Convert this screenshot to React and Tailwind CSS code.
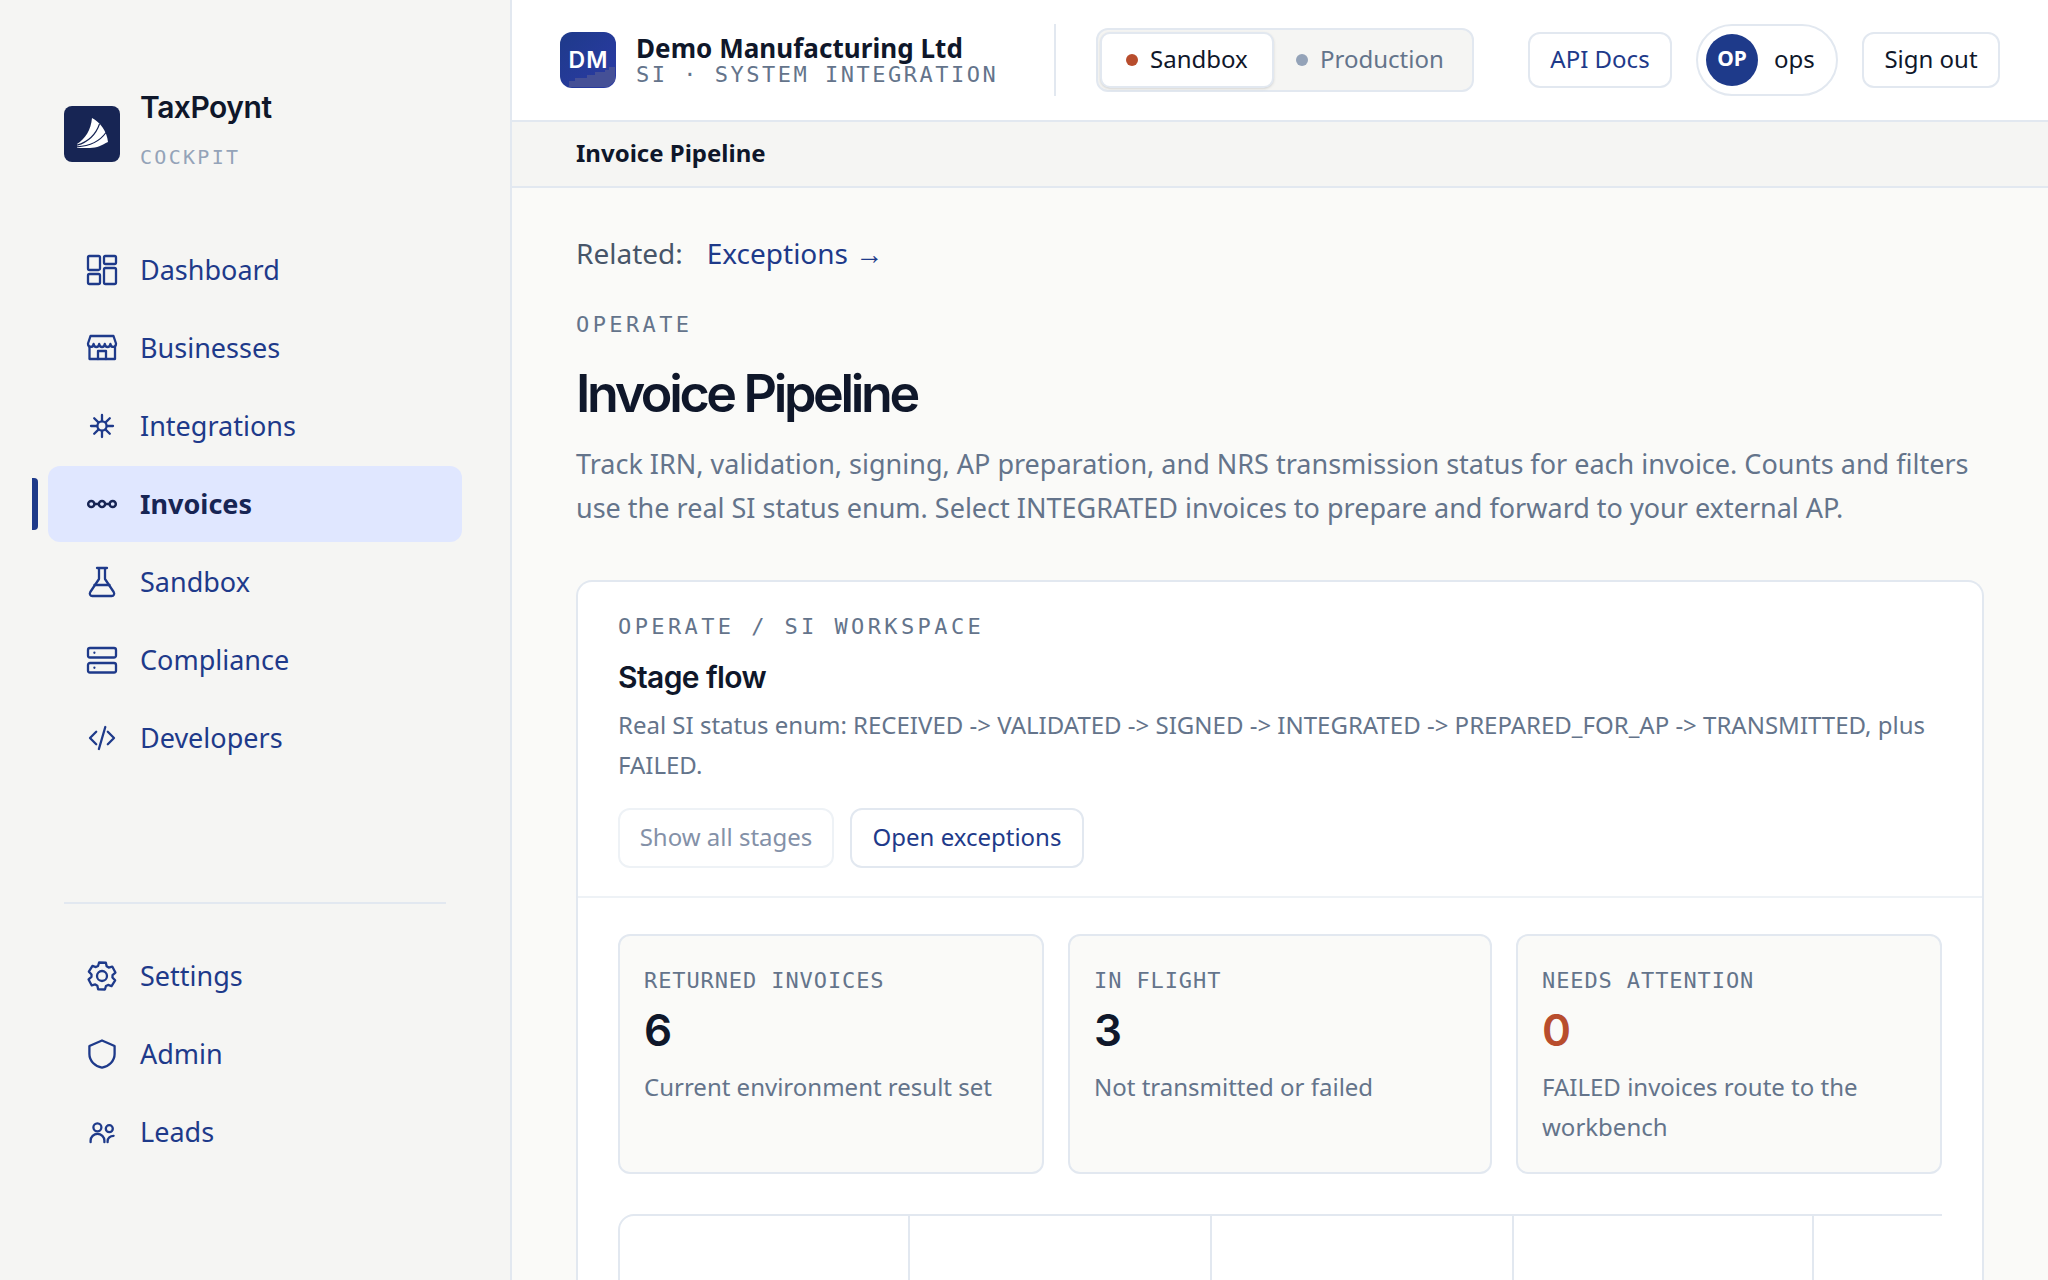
import React from 'react';
import clsx from 'clsx';

// All icons share a 36px grid with the origin in the middle
const Icon = ({ children, strokeWidth = 2.3 }) => (
  <svg
    width="36"
    height="36"
    viewBox="-18 -18 36 36"
    fill="none"
    stroke="currentColor"
    strokeWidth={strokeWidth}
    strokeLinecap="round"
    strokeLinejoin="round"
    className="shrink-0"
  >
    {children}
  </svg>
);

const DashboardIcon = () => (
  <Icon>
    <rect x="-14" y="-14" width="12" height="14" rx="1.5" />
    <rect x="2" y="-14" width="12" height="8" rx="1.5" />
    <rect x="-14" y="4" width="12" height="10" rx="1.5" />
    <rect x="2" y="-2" width="12" height="16" rx="1.5" />
  </Icon>
);

const StoreIcon = () => (
  <Icon>
    <path d="M-11.5 -12h23l2.5 7.5c0 4.5-5 4.5-5.6.5c-.6 4-5 4-5.6 0c-.6 4-5 4-5.6 0c-.6 4-5 4-5.6 0c-.6 4-5.6 4-5.6-.5z" />
    <path d="M-12.5 -1.5v12.5h25.5v-12.5" />
    <path d="M-4 11v-8h8v8" />
  </Icon>
);

const HubIcon = () => (
  <Icon>
    <circle r="4.6" />
    <path d="M0 -5v-6M0 5v6M-5 0h-6M5 0h6M-3.6 -3.6l-4.2 -4.2M3.6 3.6l4.2 4.2M-3.6 3.6l-4.2 4.2M3.6 -3.6l4.2 -4.2" />
  </Icon>
);

const PipelineIcon = () => (
  <Icon strokeWidth={2.5}>
    <circle cx="-10.7" r="3.1" />
    <circle r="3.1" />
    <circle cx="10.7" r="3.1" />
    <path d="M-7.4 0h4M3.4 0h4" />
  </Icon>
);

const FlaskIcon = () => (
  <Icon>
    <path d="M-5 -14h10M-3 -14v11l-8.7 13c-1.2 2 0 4 2 4h19.4c2 0 3.2-2 2-4l-8.7-13v-11" />
    <path d="M-7.5 3h15" />
  </Icon>
);

const ServerIcon = () => (
  <Icon>
    <rect x="-14" y="-12" width="28" height="9.5" rx="2" />
    <rect x="-14" y="3" width="28" height="9.5" rx="2" />
    <path d="M-7.6 -7.3v.1M-7.6 7.7v.1" />
  </Icon>
);

const CodeIcon = () => (
  <Icon>
    <path d="M-5.8 -6.2l-6.2 6.2l6.2 6.2M5.8 -6.2l6.2 6.2l-6.2 6.2M3.3 -11l-6.4 22" />
  </Icon>
);

const GearIcon = () => (
  <Icon>
    <circle r="5" />
    <path
      transform="rotate(2)"
      d="M-3.4 -13.4H3.4L4.3 -9.9L6.4 -8.7L9.9 -9.8L13.3 -3.9L10.5 -1.2V1.2L13.3 3.9L9.9 9.8L6.4 8.7L4.3 9.9L3.4 13.4H-3.4L-4.3 9.9L-6.4 8.7L-9.9 9.8L-13.3 3.9L-10.5 1.2V-1.2L-13.3 -3.9L-9.9 -9.8L-6.4 -8.7L-4.3 -9.9z"
    />
  </Icon>
);

const ShieldIcon = () => (
  <Icon>
    <path d="M0 -13.5L12.6 -8V0C12.6 7 7 12.3 0 13.7C-7 12.3 -12.6 7 -12.6 0V-8z" />
  </Icon>
);

const PeopleIcon = () => (
  <Icon>
    <circle cx="-4.6" cy="-4.7" r="4" />
    <circle cx="7.3" cy="-3.3" r="3.5" />
    <path d="M-11.4 10.2v-1.4a6.9 6.9 0 0 1 13.8 0v1.4" />
    <path d="M5.6 10.2v-1c0-3 2.6-5.4 6-5.4" />
  </Icon>
);

const Logo = () => (
  <svg width="56" height="56" viewBox="0 0 56 56" className="mt-[21px] shrink-0 rounded-lg bg-[#172554]">
    <path d="M28 12C36 16 43 25 44 36C38 39 33 42 26 42H13V38C21 33 27 24 28 12z" fill="#fff" />
    <g fill="none" stroke="#172554" strokeWidth="1.2">
      <path d="M35.500 18C32 28 24 36 13 39.200" />
      <path d="M42 26.500C36 35 26 40 13 40.800" />
    </g>
  </svg>
);

const mainNav = [
  { label: 'Dashboard', icon: DashboardIcon },
  { label: 'Businesses', icon: StoreIcon },
  { label: 'Integrations', icon: HubIcon },
  { label: 'Invoices', icon: PipelineIcon, active: true },
  { label: 'Sandbox', icon: FlaskIcon },
  { label: 'Compliance', icon: ServerIcon },
  { label: 'Developers', icon: CodeIcon },
];

const footerNav = [
  { label: 'Settings', icon: GearIcon },
  { label: 'Admin', icon: ShieldIcon },
  { label: 'Leads', icon: PeopleIcon },
];

const stats = [
  { label: 'RETURNED INVOICES', value: 6, note: 'Current environment result set' },
  { label: 'IN FLIGHT', value: 3, note: 'Not transmitted or failed' },
  { label: 'NEEDS ATTENTION', value: 0, note: 'FAILED invoices route to the workbench', alert: true },
];

const NavItem = ({ item }) => {
  const ItemIcon = item.icon;
  return (
    <a
      className={clsx(
        'relative flex h-[76px] items-center gap-5 rounded-xl pl-9 text-[27px]',
        item.active ? 'bg-[#e0e7ff] font-bold text-[#172554]' : 'text-[#1e3a8a]'
      )}
    >
      {item.active && <span className="absolute -left-4 top-3 h-[52px] w-1.5 rounded-r bg-[#1e3a8a]" />}
      <ItemIcon />
      <span className="leading-10">{item.label}</span>
    </a>
  );
};

const Sidebar = () => (
  <aside className="flex w-[512px] shrink-0 flex-col border-r-2 border-[#e2e8f0] bg-[#f5f5f3] pt-[85px]">
    <div className="flex gap-5 pl-16">
      <Logo />
      <div>
        <div className="font-['Inter'] text-[30px] leading-[44px] font-semibold tracking-[-0.016em] text-[#0f172a]">
          TaxPoynt
        </div>
        <div className="mt-3.5 font-['DejaVu_Sans_Mono',monospace] text-[20px] leading-7 tracking-[2.3px] text-[#94a3b8]">
          COCKPIT
        </div>
      </div>
    </div>

    <nav className="mt-[61px] flex flex-col gap-0.5 px-12">
      {mainNav.map((item) => (
        <NavItem key={item.label} item={item} />
      ))}
    </nav>

    <div className="mx-16 mt-[126px] h-0.5 bg-[#e2e8f0]" />

    <nav className="mt-[34px] flex flex-col gap-0.5 px-12">
      {footerNav.map((item) => (
        <NavItem key={item.label} item={item} />
      ))}
    </nav>
  </aside>
);

const Header = () => (
  <header className="flex h-[122px] shrink-0 items-center border-b-2 border-[#e2e8f0] bg-white px-12">
    <div className="relative flex size-14 items-center justify-center overflow-hidden rounded-xl bg-linear-to-br from-[#1e3a8a] to-[#2b3aa5] font-['Inter'] text-[23px] font-semibold text-white">
      <svg width="56" height="56" className="absolute inset-0">
        <path d="M9 55V49H15V46H27V43H35V40H45V38H49V35H55V49L48 55z" fill="#455096" />
      </svg>
      <span className="relative pl-px tracking-[1px]">DM</span>
    </div>
    <div className="ml-5">
      <div className="text-[26px] leading-7 font-bold tracking-[0.05px] text-[#0f172a]">Demo Manufacturing Ltd</div>
      <div className="pt-px font-['DejaVu_Sans_Mono',monospace] text-[22px] leading-6 tracking-[2.5px] text-[#64748b]">
        SI · SYSTEM INTEGRATION
      </div>
    </div>
    <div className="ml-auto h-[72px] w-0.5 bg-[#e2e8f0]" />

    <div className="ml-10 flex h-16 rounded-xl border-2 border-[#e2e8f0] bg-[#f5f5f3] p-0.5 text-2xl">
      <div className="flex w-[174px] items-center gap-3 rounded-[10px] border-2 border-[#e2e8f0] bg-white pl-6 text-[#0f172a] shadow-sm">
        <span className="size-3 rounded-full bg-[#b84d2d]" />
        <span className="pb-0.5">Sandbox</span>
      </div>
      <div className="flex w-[196px] items-center gap-3 pl-[22px] text-[#64748b]">
        <span className="size-3 rounded-full bg-[#94a3b8]" />
        <span className="pb-0.5">Production</span>
      </div>
    </div>

    <button className="ml-[54px] h-14 w-36 rounded-xl border-2 border-[#e2e8f0] pb-0.5 text-2xl text-[#1e3a8a]">
      API Docs
    </button>
    <div className="ml-6 flex h-[72px] w-[142px] items-center gap-4 rounded-full border-2 border-[#e2e8f0] pl-2 text-2xl text-[#0f172a]">
      <span className="flex size-[52px] items-center justify-center rounded-full bg-[#1e3a8a] pb-1 text-[21px] font-bold text-white">
        OP
      </span>
      <span className="pb-0.5">ops</span>
    </div>
    <button className="ml-6 h-14 w-[138px] rounded-xl border-2 border-[#e2e8f0] pb-0.5 text-2xl text-[#0f172a]">
      Sign out
    </button>
  </header>
);

const Eyebrow = ({ children }) => (
  <div className="font-['DejaVu_Sans_Mono',monospace] text-[22px] leading-7 tracking-[3.4px] text-[#64748b]">
    {children}
  </div>
);

const StatCard = ({ stat }) => (
  <div className="rounded-xl border-2 border-[#e2e8f0] bg-[#fafaf8] px-6 pt-[31px] pb-[25px]">
    <div className="font-['DejaVu_Sans_Mono',monospace] text-[22px] leading-7 tracking-[0.9px] text-[#64748b]">
      {stat.label}
    </div>
    <div
      className={clsx(
        "mt-[11px] font-['Inter'] text-[44px] leading-[48px] font-semibold",
        stat.alert ? 'text-[#b84d2d]' : 'text-[#0f172a]'
      )}
    >
      {stat.value}
    </div>
    <p className="mt-[13px] text-2xl leading-10 text-[#64748b]">{stat.note}</p>
  </div>
);

const StageFlowCard = () => (
  <section className="mt-[50px] flex-1 rounded-t-2xl border-2 border-b-0 border-[#e2e8f0] bg-white">
    <div className="border-b-2 border-[#eef2f6] px-10 pt-[31px] pb-7">
      <Eyebrow>OPERATE / SI WORKSPACE</Eyebrow>
      <h2 className="mt-4 font-['Inter'] text-[30px] leading-10 font-semibold tracking-[-0.02em] text-[#0f172a]">
        Stage flow
      </h2>
      <p className="mt-2 text-2xl leading-10 text-[#64748b]">
        Real SI status enum: RECEIVED -&gt; VALIDATED -&gt; SIGNED -&gt; INTEGRATED -&gt; PREPARED_FOR_AP -&gt; TRANSMITTED,
        plus FAILED.
      </p>
      <div className="mt-[23px] flex gap-4 text-2xl">
        <button className="h-[60px] w-[216px] rounded-xl border-2 border-[#eef2f6] pb-0.5 text-[#8491a8]">
          Show all stages
        </button>
        <button className="h-[60px] w-[234px] rounded-xl border-2 border-[#e2e8f0] pb-0.5 text-[#1e3a8a]">
          Open exceptions
        </button>
      </div>
    </div>

    <div className="px-10 pt-9">
      <div className="grid grid-cols-[426px_424px_426px] gap-6">
        {stats.map((stat) => (
          <StatCard key={stat.label} stat={stat} />
        ))}
      </div>

      <div className="mt-10 overflow-hidden">
        <div className="flex h-40 w-[1800px] rounded-2xl border-2 border-[#e2e8f0]">
          <div className="w-[290px] border-r-2 border-[#e2e8f0]" />
          <div className="w-[302px] border-r-2 border-[#e2e8f0]" />
          <div className="w-[302px] border-r-2 border-[#e2e8f0]" />
          <div className="w-[300px] border-r-2 border-[#e2e8f0]" />
        </div>
      </div>
    </div>
  </section>
);

export default function App() {
  return (
    <div className="flex h-screen overflow-hidden bg-[#fafaf8] font-['Noto_Sans',sans-serif]">
      <Sidebar />
      <div className="flex min-w-0 flex-1 flex-col">
        <Header />
        <div className="flex h-[66px] shrink-0 items-center border-b-2 border-[#e2e8f0] bg-[#f5f5f3] px-16 pb-0.5 text-2xl font-bold text-[#0f172a]">
          Invoice Pipeline
        </div>
        <main className="flex min-h-0 flex-1 flex-col px-16 pt-[43px]">
          <div className="flex gap-6 text-[28px] leading-[44px]">
            <span className="text-[#475569]">Related:</span>
            <a className="text-[#1e3a8a]">Exceptions →</a>
          </div>
          <div className="mt-9">
            <Eyebrow>OPERATE</Eyebrow>
          </div>
          <h1 className="mt-[25px] font-['Inter'] text-[52px] leading-[60px] font-semibold tracking-[-3.35px] text-[#0f172a]">
            Invoice Pipeline
          </h1>
          <p className="mt-[18px] text-[27px] leading-[44px] text-[#64748b]">
            Track IRN, validation, signing, AP preparation, and NRS transmission status for each invoice. Counts and
            filters use the real SI status enum. Select INTEGRATED invoices to prepare and forward to your external AP.
          </p>
          <StageFlowCard />
        </main>
      </div>
    </div>
  );
}
